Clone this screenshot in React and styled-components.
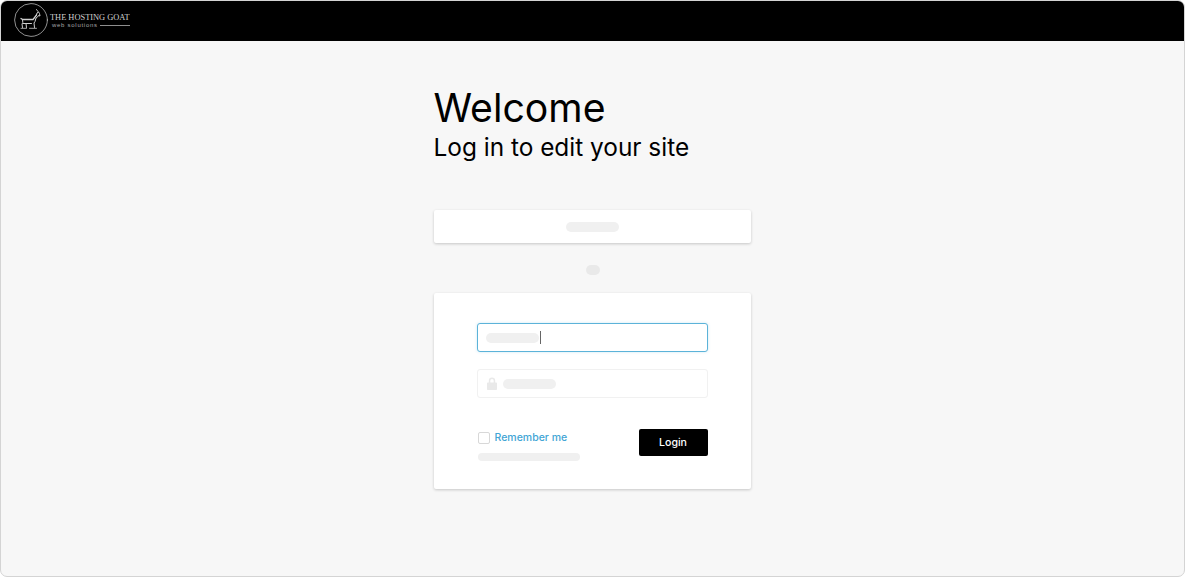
import styled, { createGlobalStyle } from 'styled-components'

const GlobalStyle = createGlobalStyle`
  html, body {
    margin: 0;
    padding: 0;
    background: #fff;
  }
  body {
    font-family: Inter, "Liberation Sans", sans-serif;
    color: #000;
  }
`

const Page = styled.div`
  width: 1190px;
  height: 579px;
  padding: 0 5px 2px 0;
  box-sizing: border-box;
  overflow: hidden;
`

const Frame = styled.div`
  height: 100%;
  box-sizing: border-box;
  display: flex;
  flex-direction: column;
  background: #f7f7f7;
  border: 1px solid #d4d4d4;
  border-radius: 7px;
  overflow: hidden;
`

const TopBar = styled.header`
  height: 40px;
  box-sizing: border-box;
  flex-shrink: 0;
  display: flex;
  align-items: center;
  gap: 2px;
  padding: 0 0 3px 13px;
  background: #000;
`

const BrandText = styled.div`
  display: flex;
  flex-direction: column;
  margin-top: 2px;
  color: #cfcfcf;
`

const BrandName = styled.span`
  font-family: "Liberation Serif", serif;
  font-size: 8.4px;
  line-height: 9px;
  white-space: nowrap;
`

const BrandSub = styled.div`
  display: flex;
  align-items: center;
  gap: 2px;
  padding-left: 2px;
  font-family: "Liberation Sans", sans-serif;
  font-size: 6px;
  line-height: 6px;
  letter-spacing: 0.72px;
  white-space: nowrap;
  color: #a8a8a8;

  &::after {
    content: '';
    flex: 1;
    height: 1px;
    background: #8e8e8e;
  }
`

const Main = styled.main`
  flex: 1;
  display: flex;
  justify-content: center;
  padding-top: 46px;
  padding-right: 1px;
`

const Column = styled.div`
  width: 317px;
  display: flex;
  flex-direction: column;
`

const Title = styled.h1`
  margin: 0;
  font-size: 39.2px;
  line-height: 42px;
  font-weight: 400;
  color: #000;
`

const Subtitle = styled.h2`
  margin: 0 0 45px;
  font-size: 24.4px;
  line-height: 36px;
  font-weight: 400;
  color: #000;
`

const Card = styled.div`
  background: #fff;
  border-radius: 2px;
  box-shadow: 0 1px 3px rgba(0, 0, 0, 0.2);
`

const SocialCard = styled(Card)`
  height: 33px;
  padding-left: 1px;
  display: flex;
  align-items: center;
  justify-content: center;
`

const Skeleton = styled.span`
  display: block;
  flex-shrink: 0;
  width: ${p => p.$w}px;
  height: ${p => p.$h || 10}px;
  border-radius: 5px;
  background: #f0f0f0;
`

const Divider = styled.div`
  height: 50px;
  box-sizing: border-box;
  padding: 4px 0 0 1px;
  display: flex;
  align-items: center;
  justify-content: center;
`

const DividerPill = styled(Skeleton)`
  background: #e9e9e9;
`

const LoginCard = styled(Card)`
  height: 196px;
  box-sizing: border-box;
  padding: 30px 43px 0;
  display: flex;
  flex-direction: column;
`

const Field = styled.div`
  height: 29px;
  box-sizing: border-box;
  margin-bottom: ${p => p.$mb || 0}px;
  display: flex;
  align-items: center;
  gap: ${p => p.$gap || 0}px;
  padding-left: ${p => p.$pad || 8}px;
  background: #fff;
  border-radius: 3px;
  border: 1px solid ${p => (p.$focus ? '#5cb3d9' : '#f1f1f1')};
  box-shadow: ${p => (p.$focus ? '0 0 3px rgba(92, 179, 217, 0.3)' : 'none')};
`

const Caret = styled.span`
  width: 1px;
  height: 13px;
  margin-left: 1px;
  background: #666;
`

const Actions = styled.div`
  margin-top: 31px;
  display: flex;
  justify-content: space-between;
  align-items: flex-start;
`

const RememberColumn = styled.div`
  padding-left: 1px;
  display: flex;
  flex-direction: column;
  gap: 7px;
`

const Remember = styled.label`
  display: flex;
  align-items: center;
  gap: 5px;
  height: 17px;
  font-size: 10.5px;
  font-weight: 500;
  color: #42a5d5;
`

const Box = styled.span`
  width: 12px;
  height: 12px;
  box-sizing: border-box;
  background: #fff;
  border: 1px solid #d8d8d8;
  border-radius: 2px;
`

const LoginButton = styled.button`
  width: 69px;
  height: 27px;
  padding: 0;
  border: 0;
  border-radius: 2px;
  background: #000;
  color: #fff;
  font: 500 10.6px Inter, "Liberation Sans", sans-serif;
`

const GoatLogo = () => (
  <svg width="34" height="34" viewBox="0 0 34 34" fill="none" stroke="#cfcfcf" strokeLinejoin="round" strokeLinecap="round">
    <circle cx="17" cy="17" r="16.4" strokeWidth="0.7" />
    <path d="M7 15.500l1.500 1h10.500l3.500-4.500" strokeWidth="1.300" />
    <path d="M22.500 12l.5-2 1.500-1 1 1.500.5 2.500-1.500-.5-1 1.500-1.500 1-1 3.500-1 1.500.5 4.500" strokeWidth="1" />
    <path d="M24 8.500l-1.500-2" strokeWidth="0.9" />
    <path d="M8.500 16.500l.3 3-.8 1.500.5 3.500M9 20.500h8.500M12 20.500l.5 4" strokeWidth="1" />
    <path d="M7 25.300h5.500M15.500 25.300h7" strokeWidth="0.8" />
  </svg>
)

const LockIcon = () => (
  <svg width="10" height="13" viewBox="0 0 10 13" fill="#e9e9e9">
    <path d="M5 0.500a3.200 3.200 0 0 0-3.200 3.200v1.800h-1a.8.8 0 0 0-.8.800v5.900a.8.8 0 0 0 .8.800h8.400a.8.8 0 0 0 .8-.8v-5.900a.8.8 0 0 0-.8-.8h-1v-1.800a3.200 3.200 0 0 0-3.200-3.200zm0 1.500a1.700 1.700 0 0 1 1.700 1.700v1.800h-3.400v-1.800a1.700 1.700 0 0 1 1.700-1.700z" />
  </svg>
)

export default function App() {
  return (
    <Page>
      <GlobalStyle />
      <Frame>
        <TopBar>
          <GoatLogo />
          <BrandText>
            <BrandName>THE HOSTING GOAT</BrandName>
            <BrandSub>web solutions</BrandSub>
          </BrandText>
        </TopBar>
        <Main>
          <Column>
            <Title>Welcome</Title>
            <Subtitle>Log in to edit your site</Subtitle>
            <SocialCard>
              <Skeleton $w={53} />
            </SocialCard>
            <Divider>
              <DividerPill $w={14} />
            </Divider>
            <LoginCard>
              <Field $focus $mb={17}>
                <Skeleton $w={53} />
                <Caret />
              </Field>
              <Field $gap={6} $pad={9}>
                <LockIcon />
                <Skeleton $w={53} />
              </Field>
              <Actions>
                <RememberColumn>
                  <Remember>
                    <Box />
                    Remember me
                  </Remember>
                  <Skeleton $w={102} $h={8} />
                </RememberColumn>
                <LoginButton>Login</LoginButton>
              </Actions>
            </LoginCard>
          </Column>
        </Main>
      </Frame>
    </Page>
  )
}
